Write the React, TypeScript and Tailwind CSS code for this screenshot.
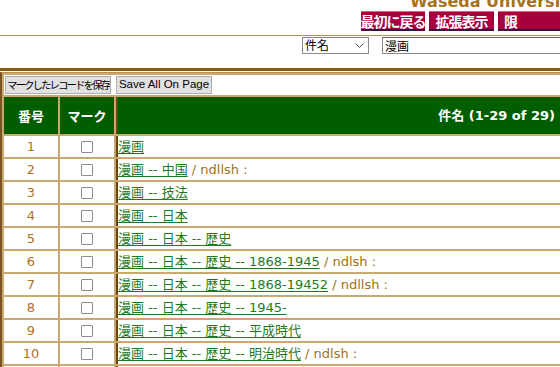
import React from "react";

type Row = { n: number; parts: string[]; suffix?: string };

const rows: Row[] = [
  { n: 1, parts: ["漫画"] },
  { n: 2, parts: ["漫画 -- 中国"], suffix: " / ndllsh :" },
  { n: 3, parts: ["漫画 -- 技法"] },
  { n: 4, parts: ["漫画 -- 日本"] },
  { n: 5, parts: ["漫画 -- 日本 -- 歴史"] },
  { n: 6, parts: ["漫画 -- 日本 -- 歴史 -- 1868-1945"], suffix: " / ndlsh :" },
  { n: 7, parts: ["漫画 -- 日本 -- 歴史 -- 1868-19452"], suffix: " / ndllsh :" },
  { n: 8, parts: ["漫画 -- 日本 -- 歴史 -- 1945-"] },
  { n: 9, parts: ["漫画 -- 日本 -- 歴史 -- 平成時代"] },
  { n: 10, parts: ["漫画 -- 日本 -- 歴史 -- 明治時代"], suffix: " / ndlsh :" },
  { n: 11, parts: ["漫画 -- 日本 -- 歴史 -- 昭和時代"] },
];

const font = { fontFamily: '"DejaVu Sans", "Noto Sans CJK JP", sans-serif' };
const jp = { fontFamily: '"Noto Sans CJK JP", sans-serif' };

function RedBtn({ label, w, extra }: { label: string; w: string; extra?: string }) {
  return (
    <div
      className={`${w} h-[20px] shrink-0 bg-[#a8003c] border-t border-t-[#e0607a] border-b-2 border-b-[#3a1040] text-white font-bold text-[14px] leading-[16px] whitespace-nowrap overflow-hidden flex items-center ${extra ?? "justify-center tracking-[-1px]"}`}
      style={jp}
    >
      {label}
    </div>
  );
}

export default function App() {
  return (
    <div className="w-[560px] h-[367px] overflow-hidden bg-white" style={font}>
      {/* top */}
      <div className="h-[10px] flex items-end overflow-visible">
        <div
          className="pl-[410px] whitespace-nowrap text-[16px] leading-[16px] font-bold text-[#a8711c]"
          style={font}
        >
          Waseda University Library
        </div>
      </div>
      <div className="mt-[1px] flex gap-[4px] pl-[361px] w-[760px]">
        <RedBtn label="最初に戻る" w="w-[64px]" />
        <RedBtn label="拡張表示" w="w-[65px]" />
        <RedBtn label="限定検索" w="w-[240px]" extra="justify-start pl-[6px] tracking-[48px]" />
      </div>
      <div className="mt-[4px] h-px bg-[#c09050]" />
      <div className="mt-[1px] flex items-start pl-[302px] gap-[13px] w-[700px]">
        <div
          className="w-[67px] h-[17px] border border-[#8a8a8a] bg-white flex items-center justify-between pl-[2px] pr-[4px] text-[12px] leading-[14px] text-black"
          style={jp}
        >
          <span className="-mt-[2px]">件名</span>
          <svg width="9" height="6" viewBox="0 0 9 6" className="mt-[1px]">
            <path d="M0.5 0.5 L4.5 4.5 L8.5 0.5" fill="none" stroke="#555" strokeWidth="1" />
          </svg>
        </div>
        <div
          className="w-[200px] h-[17px] border border-[#8a8a8a] border-t-[#6a6a6a] bg-white pl-[2px] text-[12px] leading-[15px] text-black"
          style={jp}
        >
          漫画
        </div>
      </div>
      <div className="mt-[14px] h-[3px] bg-[#8a5a0c]" />
      <div className="h-px bg-white" />

      {/* table */}
      <table
        className="border-separate border-spacing-[2px] bg-[#c9a96e] w-[564px] border-l-2 border-l-[#7a5420] border-t border-t-[#b89050]"
        style={font}
      >
        <tbody>
          <tr>
            <td colSpan={3} className="bg-white h-[20px] p-0">
              <div className="flex items-center gap-[5px] pl-[1px]">
                <div
                  className="w-[106px] h-[18px] bg-[#e1e1e1] border border-[#adadad] flex items-center justify-center text-[10.5px] tracking-[-2px] whitespace-nowrap overflow-hidden text-black"
                  style={jp}
                >
                  マークしたレコードを保存
                </div>
                <div
                  className="w-[96px] h-[18px] bg-[#e1e1e1] border border-[#adadad] flex items-center justify-center text-[11.5px] whitespace-nowrap text-black"
                  style={{ fontFamily: '"Liberation Sans", Arial, sans-serif' }}
                >
                  Save All On Page
                </div>
              </div>
            </td>
          </tr>
          <tr>
            <td className="w-[54px] h-[37px] bg-[#005e00] text-center text-white font-bold text-[13px] p-0" style={jp}>
              番号
            </td>
            <td className="w-[54px] h-[37px] bg-[#005e00] text-center text-white font-bold text-[13px] p-0" style={jp}>
              マーク
            </td>
            <td className="h-[37px] bg-[#005e00] text-right text-white font-bold text-[13px] pr-[7px] border-l-2 border-l-[#6b4310] whitespace-nowrap">
              件名 (1-29 of 29)
            </td>
          </tr>
          {rows.map((r) => (
            <tr key={r.n}>
              <td className="h-[21px] bg-white text-center text-[13px] text-[#b0701c] p-0">
                {r.n}
              </td>
              <td className="h-[21px] bg-white p-0">
                <div className="flex justify-center">
                  <span className="block w-[12px] h-[12px] border border-[#8c8c8c] bg-white rounded-[1px]" />
                </div>
              </td>
              <td className="h-[21px] bg-white p-0 border-l-2 border-l-[#6b4310] whitespace-nowrap text-[13px]">
                <span className="text-[#1f7a1f] underline underline-offset-[2px] decoration-[#1f7a1f]">
                  {r.parts[0]}
                </span>
                {r.suffix && <span className="text-[#a0701c]">{r.suffix}</span>}
              </td>
            </tr>
          ))}
        </tbody>
      </table>
    </div>
  );
}
